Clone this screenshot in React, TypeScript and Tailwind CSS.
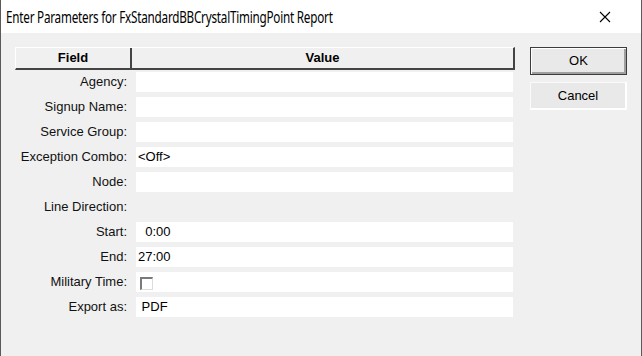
const rows: { label: string; value?: string; box?: boolean; check?: boolean }[] = [
  { label: 'Agency:', value: '', box: true },
  { label: 'Signup Name:', value: '', box: true },
  { label: 'Service Group:', value: '', box: true },
  { label: 'Exception Combo:', value: '<Off>', box: true },
  { label: 'Node:', value: '', box: true },
  { label: 'Line Direction:', box: false },
  { label: 'Start:', value: '\u00a0\u00a00:00', box: true },
  { label: 'End:', value: '27:00', box: true },
  { label: 'Military Time:', box: true, check: true },
  { label: 'Export as:', value: ' PDF', box: true },
];

const App = () => {
  return (
    <div className="w-[642px] h-[356px] flex flex-col border-x border-[#5a5a5a] bg-[#f0f0f0] font-['Liberation_Sans',Arial,sans-serif] text-[13px] text-black overflow-hidden">
      {/* title bar */}
      <div className="h-[33px] bg-white flex items-center justify-between pl-[5px] pr-[30px] shrink-0">
        <span className="font-['Noto_Sans',sans-serif] text-[16px] tracking-[-0.3px] text-black whitespace-nowrap origin-left scale-x-[0.73]">
          Enter Parameters for FxStandardBBCrystalTimingPoint Report
        </span>
        <svg width="12" height="12" viewBox="0 0 12 12" className="text-black">
          <path d="M1 1 L11 11 M11 1 L1 11" stroke="currentColor" strokeWidth="1.1" fill="none" />
        </svg>
      </div>

      <div className="flex pl-[14px] pt-[14px]">
        {/* grid */}
        <div className="w-[500px] flex flex-col">
          <div className="h-[23px] flex bg-[#f0f0f0] border-t border-l border-white border-b-2 border-b-[#444] border-r-2 border-r-[#444] font-bold text-[13px]">
            <div className="w-[116px] flex items-center justify-center border-r-2 border-[#444]">Field</div>
            <div className="flex-1 flex items-center justify-center">Value</div>
          </div>
          <div className="flex flex-col gap-[5px] mt-[2px]">
            {rows.map((r) => (
              <div key={r.label} className="flex h-[20px] items-center">
                <div className="w-[117px] pr-[5px] text-right text-[#111]">{r.label}</div>
                <div
                  className={`ml-[4px] w-[377px] h-[20px] flex items-center pl-[2px] ${r.box ? 'bg-white' : ''}`}
                >
                  {r.check ? (
                    <span className="ml-[2px] mt-[2px] w-[13px] h-[13px] bg-white border-t-2 border-l-2 border-[#7a7a7a] border-b border-r border-b-[#dcdcdc] border-r-[#dcdcdc]" />
                  ) : (
                    <span className="whitespace-pre">{r.value}</span>
                  )}
                </div>
              </div>
            ))}
          </div>
        </div>

        {/* buttons */}
        <div className="ml-[15px] w-[97px] flex flex-col gap-[7px]">
          <button className="h-[28px] bg-[#e9e9e9] border border-[#3c3c3c] shadow-[inset_1px_1px_0_#fff,inset_-2px_-2px_0_#a0a0a0] text-[13px]">
            OK
          </button>
          <button className="h-[28px] bg-[#e9e9e9] border-t border-l border-white border-b-2 border-r-2 border-[#707070] border-t-[#fafafa] border-l-[#fafafa] text-[13px]">
            Cancel
          </button>
        </div>
      </div>
    </div>
  );
};

export default App;
